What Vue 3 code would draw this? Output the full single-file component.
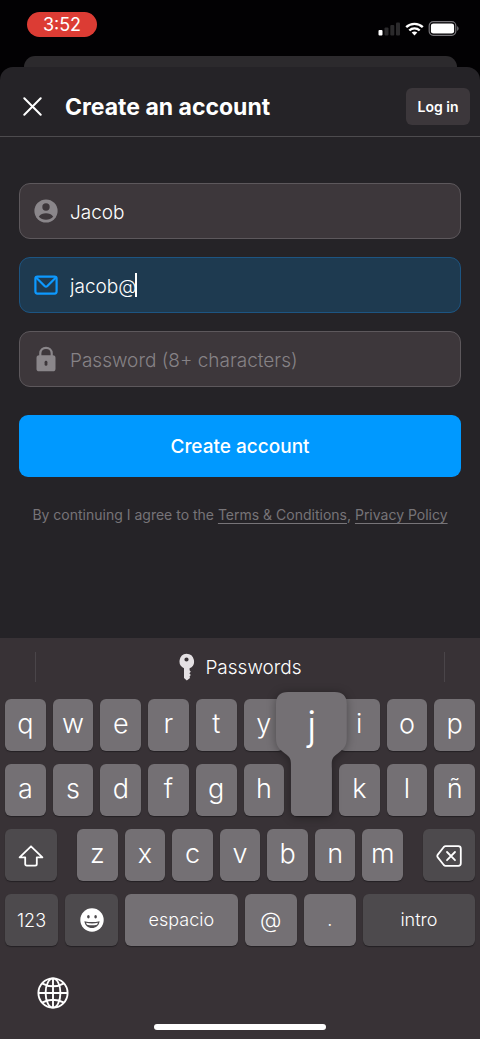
<script setup>
import { ref } from 'vue'

const name = ref('Jacob')
const email = ref('jacob@')
const password = ref('')

const topRow = ['q', 'w', 'e', 'r', 't', 'y', 'u', 'i', 'o', 'p']
const homeRow = ['a', 's', 'd', 'f', 'g', 'h', 'j', 'k', 'l', 'ñ']
const bottomRow = ['z', 'x', 'c', 'v', 'b', 'n', 'm']
const pressed = 'j'
// The key preview lies over this key, so its face stays blank.
const covered = 'u'
</script>

<template>
  <div class="screen">
    <div class="status">
      <span class="clock">3:52</span>
      <div class="indicators">
        <svg width="23" height="14" viewBox="0 0 23 14" aria-hidden="true">
          <rect x="0.5" y="8" width="4" height="5.5" rx="1" fill="#fff" />
          <rect x="6.5" y="5.5" width="4" height="8" rx="1" fill="#2b2a2c" />
          <rect x="12.3" y="3" width="4" height="10.5" rx="1" fill="#2b2a2c" />
          <rect x="18" y="0.5" width="4" height="13" rx="1" fill="#2b2a2c" />
        </svg>
        <svg width="19" height="14" viewBox="0 0 19 14" aria-hidden="true">
          <g fill="none" stroke="#fff" stroke-width="2.4">
            <path d="M1.2 5.2C5.8 .8 13.2 .8 17.8 5.2" />
            <path d="M4.3 8.5C7.2 5.7 11.8 5.7 14.7 8.5" />
          </g>
          <path d="M9.5 13.5L6.7 10.6C8.3 9.2 10.7 9.2 12.3 10.6Z" fill="#fff" />
        </svg>
        <svg width="31" height="15" viewBox="0 0 31 15" aria-hidden="true">
          <rect x="1.2" y="0.7" width="26.6" height="13.6" rx="4" fill="none" stroke="#77757a" stroke-width="1.2" />
          <rect x="2.9" y="2.4" width="23.2" height="10.2" rx="2.4" fill="#fff" />
          <path d="M29.2 5.2C31 5.8 31 9.2 29.2 9.8Z" fill="#77757a" />
        </svg>
      </div>
    </div>

    <div class="backsheet"></div>

    <main class="sheet">
      <header class="header">
        <button class="close" type="button" aria-label="Close">
          <svg width="19" height="19" viewBox="0 0 19 19" aria-hidden="true">
            <path d="M1.3 1.3L17.7 17.7M17.7 1.3L1.3 17.7" stroke="#fff" stroke-width="2" stroke-linecap="round" />
          </svg>
        </button>
        <h1>Create an account</h1>
        <button class="login" type="button">Log in</button>
      </header>

      <form class="form" @submit.prevent>
        <label class="field">
          <svg width="24" height="24" viewBox="0 0 24 24" aria-hidden="true">
            <circle cx="12" cy="12" r="11.6" fill="#8a868a" />
            <circle cx="12" cy="8" r="3.7" fill="#3d373b" />
            <path d="M4.8 17.8C6.5 15.2 9 14.3 12 14.3S17.5 15.2 19.2 17.8C17.4 19.7 14.8 20.7 12 20.7S6.6 19.7 4.8 17.8Z" fill="#3d373b" />
          </svg>
          <input v-model="name" type="text" aria-label="Name" />
        </label>
        <label class="field active">
          <svg width="24" height="24" viewBox="0 0 24 24" fill="none" stroke="#0d99ff" stroke-width="2.2" stroke-linejoin="round" stroke-linecap="round" aria-hidden="true">
            <rect x="1.4" y="3.6" width="21.2" height="17" rx="2" />
            <path d="M2.3 4.8L10.6 13Q12 14.3 13.4 13L21.7 4.8" />
          </svg>
          <span class="entry">
            <input v-model="email" class="fit" type="text" inputmode="email" aria-label="Email" />
            <span class="caret"></span>
          </span>
        </label>
        <label class="field">
          <svg width="24" height="26" viewBox="0 0 24 26" aria-hidden="true">
            <path d="M6.3 11V7.3C6.3 3.9 8.8 1.8 12 1.8S17.7 3.9 17.7 7.3V11" fill="none" stroke="#8a868a" stroke-width="2.2" />
            <rect x="2.5" y="9.3" width="19" height="16" rx="2.6" fill="#8a868a" />
            <rect x="10.6" y="14.8" width="2.8" height="5" rx="1.4" fill="#3d373b" />
          </svg>
          <input v-model="password" type="password" placeholder="Password (8+ characters)" aria-label="Password" />
        </label>
        <button class="submit" type="submit">Create account</button>
        <p class="terms">
          By continuing I agree to the <a href="#terms">Terms &amp; Conditions</a>, <a href="#privacy">Privacy Policy</a>
        </p>
      </form>
    </main>

    <section class="keyboard" aria-label="Keyboard">
      <div class="suggest">
        <button class="passwords" type="button">
          <svg width="17" height="28" viewBox="0 0 17 28" aria-hidden="true">
            <path fill-rule="evenodd" d="M8.5 .8A7.6 7.6 0 0 1 11.6 15.3V17.2L12.8 18.8L11.4 20.3L12.8 22L11.6 23.6L12 25L8.8 27.4L6 25V15.3A7.6 7.6 0 0 1 8.5 .8ZM8.5 4.4A2.1 2.1 0 1 0 8.5 8.6A2.1 2.1 0 1 0 8.5 4.4Z" fill="#e4e0e3" />
          </svg>
          <span>Passwords</span>
        </button>
      </div>

      <div class="rows">
        <div class="row">
          <button v-for="k in topRow" :key="k" class="key" type="button" :aria-label="k">{{ k === covered ? '' : k }}</button>
        </div>
        <div class="row">
          <button v-for="k in homeRow" :key="k" class="key" :class="{ pressed: k === pressed }" type="button">
            <template v-if="k === pressed">
              <svg class="bubble" viewBox="0 0 71 124" preserveAspectRatio="none" aria-hidden="true">
                <path d="M12 0H59Q71 0 71 12V46C71 54 68 57 62 61.5C57 65 56 67 56 72V118Q56 124 50 124H21Q15 124 15 118V72C15 67 14 65 9 61.5C3 57 0 54 0 46V12Q0 0 12 0Z" fill="#747074" />
              </svg>
              <span class="preview">{{ k }}</span>
            </template>
            <template v-else>{{ k }}</template>
          </button>
        </div>
        <div class="row shiftrow">
          <button class="key dark side" type="button" aria-label="Shift">
            <svg width="26" height="22" viewBox="0 0 26 22" aria-hidden="true">
              <path d="M13 1.3L24.4 12.3H18.8V19Q18.8 20.6 17.2 20.6H8.8Q7.2 20.6 7.2 19V12.3H1.6Z" fill="none" stroke="#fff" stroke-width="1.8" stroke-linejoin="round" />
            </svg>
          </button>
          <div class="row letters">
            <button v-for="k in bottomRow" :key="k" class="key" type="button">{{ k }}</button>
          </div>
          <button class="key dark side" type="button" aria-label="Delete">
            <svg width="26" height="22" viewBox="0 0 26 22" fill="none" stroke="#fff" stroke-width="1.8" stroke-linejoin="round" stroke-linecap="round" aria-hidden="true">
              <path d="M9.6 1.2H22.3Q24.8 1.2 24.8 3.7V18.3Q24.8 20.8 22.3 20.8H9.6Q8.6 20.8 7.8 20L1.8 12.4Q.8 11 1.8 9.6L7.8 2Q8.6 1.2 9.6 1.2Z" />
              <path d="M11 7L19 15.2M19 7L11 15.2" />
            </svg>
          </button>
        </div>
        <div class="row">
          <button class="key dark word mode" type="button">123</button>
          <button class="key dark word mode" type="button" aria-label="Emoji">
            <svg width="24" height="24" viewBox="0 0 24 24" aria-hidden="true">
              <circle cx="12" cy="12" r="11.7" fill="#fff" />
              <ellipse cx="8.4" cy="8.8" rx="1.3" ry="1.7" fill="#4d4a4d" />
              <ellipse cx="15.6" cy="8.8" rx="1.3" ry="1.7" fill="#4d4a4d" />
              <path d="M4.4 13.2Q12 15 19.6 13.2C19 17.6 16 20 12 20S5 17.6 4.4 13.2Z" fill="#4d4a4d" />
              <path d="M6 14.8Q12 16.2 18 14.8Q17.6 16 17 16.8Q12 17.8 7 16.8Q6.4 16 6 14.8Z" fill="#fff" />
            </svg>
          </button>
          <button class="key word wide" type="button">espacio</button>
          <button class="key word at" type="button">@</button>
          <button class="key word" type="button">.</button>
          <button class="key dark word wide" type="button">intro</button>
        </div>
      </div>

      <div class="dock">
        <button class="globe" type="button" aria-label="Change language">
          <svg width="32" height="32" viewBox="0 0 32 32" fill="none" stroke="#fff" stroke-width="1.9" aria-hidden="true">
            <circle cx="16" cy="16" r="14.6" />
            <ellipse cx="16" cy="16" rx="7.4" ry="14.6" />
            <path d="M16 1.4V30.6M1.4 16H30.6M4.9 6.3Q16 12.2 27.1 6.3M4.9 25.7Q16 19.8 27.1 25.7" />
          </svg>
        </button>
      </div>
      <div class="home"></div>
    </section>
  </div>
</template>

<style>
body {
  margin: 0;
  background: #000;
}
</style>

<style scoped>
.screen,
.screen * {
  box-sizing: border-box;
}
.screen {
  min-height: 100vh;
  display: flex;
  flex-direction: column;
  background: #020103;
  color: #fff;
  font-family: Inter, "Liberation Sans", sans-serif;
}
button {
  margin: 0;
  padding: 0;
  border: 0;
  background: none;
  color: inherit;
  font: inherit;
}
svg {
  display: block;
  flex: none;
}
.status {
  height: 56px;
  padding: 12px 21px 0 27px;
  display: flex;
  justify-content: space-between;
  align-items: flex-start;
}
.clock {
  width: 70px;
  height: 25px;
  border-radius: 13px;
  background: #dc3c34;
  font-size: 18px;
  line-height: 25px;
  font-weight: 400;
  text-align: center;
}
.indicators {
  display: flex;
  align-items: center;
  gap: 4px;
  padding-top: 9px;
}
.backsheet {
  height: 23px;
  margin: 0 23px -12px 24px;
  border-radius: 11px 11px 0 0;
  background: #2c2a2d;
}
.sheet {
  flex: 1;
  border-radius: 13px 13px 0 0;
  background: #252327;
}
.header {
  height: 70px;
  padding: 10px 10px 0 23px;
  border-bottom: 1px solid #4d4b4e;
  display: flex;
  align-items: center;
}
.close {
  width: 42px;
}
h1 {
  flex: 1;
  margin: 0;
  font-size: 23px;
  line-height: 28px;
  font-weight: 700;
}
.login {
  width: 64px;
  height: 37px;
  border-radius: 6px;
  background: #3c373b;
  font-size: 14px;
  font-weight: 600;
}
.form {
  padding: 46px 19px 0;
  display: flex;
  flex-direction: column;
  gap: 18px;
}
.field {
  height: 56px;
  padding: 0 14px;
  display: flex;
  align-items: center;
  gap: 12px;
  border: 1px solid #5d585c;
  border-radius: 11px;
  background: #3d373b;
}
.field.active {
  background: #1e3a50;
  border-color: #1d5582;
}
.field input {
  flex: 1;
  min-width: 0;
  height: 32px;
  margin: 0;
  padding: 2px 0 0;
  border: 0;
  outline: 0;
  background: none;
  color: #fff;
  font: inherit;
  font-size: 19px;
  font-weight: 350;
}
.field input::placeholder {
  color: #868286;
  opacity: 1;
}
.entry {
  flex: 1;
  display: flex;
  align-items: center;
}
.field .fit {
  flex: none;
  field-sizing: content;
  caret-color: transparent;
}
.caret {
  width: 2px;
  height: 24px;
  margin-left: -2px;
  background: #fff;
}
.submit {
  height: 62px;
  margin-top: 10px;
  border-radius: 9px;
  background: #0099ff;
  font-size: 19px;
  font-weight: 550;
}
.terms {
  margin: 10px 0 0;
  color: #777478;
  font-size: 14px;
  line-height: 20px;
  text-align: center;
  white-space: nowrap;
}
.terms a {
  color: inherit;
  text-decoration: underline;
  text-underline-offset: 3px;
}
.keyboard {
  background: #383236;
}
.suggest {
  height: 61px;
  padding: 14px 35px 17px;
  display: flex;
}
.passwords {
  flex: 1;
  display: flex;
  align-items: center;
  justify-content: center;
  gap: 10px;
  border-left: 1px solid #4a4549;
  border-right: 1px solid #4a4549;
  font-size: 19px;
  font-weight: 350;
}
.rows {
  padding: 0 5px;
  display: flex;
  flex-direction: column;
  gap: 13px;
}
.row {
  display: flex;
  gap: 7px;
}
.key {
  position: relative;
  flex: 1 1 0;
  min-width: 0;
  height: 52px;
  padding-bottom: 3px;
  display: flex;
  align-items: center;
  justify-content: center;
  border-radius: 6px;
  background: #747074;
  box-shadow: 0 1px 1px #242024;
  font-size: 27px;
  font-weight: 350;
}
.dark {
  background: #4d4a4d;
}
.shiftrow {
  gap: 20px;
}
.letters {
  flex: 1;
}
.side {
  flex: none;
  width: 52px;
  padding: 2px 0 0;
}
.word {
  flex-grow: 52;
  padding-bottom: 1px;
  font-size: 18px;
}
.mode {
  flex-grow: 53;
  padding-bottom: 0;
}
.wide {
  flex-grow: 112;
}
.at {
  font-size: 22px;
}
.pressed {
  z-index: 1;
}
.bubble {
  position: absolute;
  left: -15px;
  bottom: 0;
  width: calc(100% + 30px);
  height: 124px;
  overflow: visible;
  filter: drop-shadow(0 1px 5px rgba(0, 0, 0, 0.35));
}
.preview {
  position: absolute;
  left: 0;
  right: 0;
  bottom: 66px;
  font-size: 40px;
  line-height: 48px;
}
.dock {
  padding: 31px 37px 15px;
}
.globe {
  display: block;
}
.home {
  width: 172px;
  height: 6px;
  margin: 0 auto 9px;
  border-radius: 3px;
  background: #fff;
}
</style>
